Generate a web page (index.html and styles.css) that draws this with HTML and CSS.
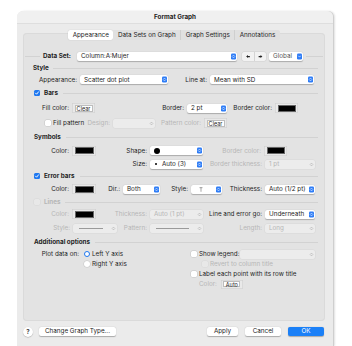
FILE: index.html
```html
<!DOCTYPE html>
<html lang="en">
<head>
  <meta charset="UTF-8">
  <title>Format Graph</title>
  <link rel="stylesheet" href="styles.css">
</head>
<body>

<div class="window">
  <div class="titlebar">Format Graph</div>

  <div class="content">
    <div class="tabs">
      <div class="tab active">Appearance</div>
      <div class="tab">Data Sets on Graph</div>
      <div class="tab">Graph Settings</div>
      <div class="tab last">Annotations</div>
    </div>

    <div class="panel">
      <!-- data set selector -->
      <div class="row ds-row">
        <span></span>
        <span class="rule"></span>
        <span class="ds-label">Data Set:</span>
        <div class="popup"><span>Column:A:Mujer</span><svg class="step" viewBox="0 0 10 12"><rect width="10" height="12" rx="2.5"/><path d="M3 5.2 5 3.2 7 5.2M3 6.8 5 8.8 7 6.8"/></svg></div>
        <span></span>
        <div class="arrows">
          <svg viewBox="0 0 8 8"><path d="M1 4 4 1.5V3H7V5H4V6.5Z"/></svg>
          <svg viewBox="0 0 8 8"><path d="M7 4 4 1.5V3H1V5H4V6.5Z"/></svg>
        </div>
        <span></span>
        <div class="popup"><span class="muted">Global</span><svg class="step" viewBox="0 0 10 12"><rect width="10" height="12" rx="2.5"/><path d="M3 5 5 7.2 7 5"/></svg></div>
        <span></span>
        <span class="rule"></span>
      </div>

      <div class="row hdr"><b>Style</b><span class="rule"></span></div>

      <div class="row short g-app">
        <span class="lbl">Appearance:</span>
        <div class="popup"><span>Scatter dot plot</span><svg class="step" viewBox="0 0 10 12"><rect width="10" height="12" rx="2.5"/><path d="M3 5.2 5 3.2 7 5.2M3 6.8 5 8.8 7 6.8"/></svg></div>
        <span class="lbl">Line at:</span>
        <div class="popup"><span>Mean with SD</span><svg class="step" viewBox="0 0 10 12"><rect width="10" height="12" rx="2.5"/><path d="M3 5.2 5 3.2 7 5.2M3 6.8 5 8.8 7 6.8"/></svg></div>
      </div>

      <div class="row tall hdr chk">
        <span class="check on"><svg viewBox="0 0 10 10"><path d="M2.5 5.2 4.3 7 7.6 3"/></svg></span>
        <b>Bars</b><span class="rule"></span>
      </div>

      <div class="row mid g-fill">
        <span class="lbl">Fill color:</span>
        <div class="well"><span class="btn-in">Clear</span></div>
        <span class="lbl">Border:</span>
        <div class="popup"><span>2 pt</span><svg class="step" viewBox="0 0 10 12"><rect width="10" height="12" rx="2.5"/><path d="M3 5.2 5 3.2 7 5.2M3 6.8 5 8.8 7 6.8"/></svg></div>
        <span class="lbl">Border color:</span>
        <div class="well"><span class="swatch"></span></div>
      </div>

      <div class="row tall g-pat">
        <span class="opt fill-opt"><span class="check"></span>Fill pattern</span>
        <span class="lbl off">Design:</span>
        <div class="popup dis"><span></span><svg class="step" viewBox="0 0 10 12"><path d="M3 5.2 5 3.2 7 5.2M3 6.8 5 8.8 7 6.8"/></svg></div>
        <span class="lbl off">Pattern color:</span>
        <div class="well"><span class="btn-in">Clear</span></div>
      </div>

      <div class="row hdr sym-hdr"><b>Symbols</b><span class="rule"></span></div>

      <div class="row h15 g-sym1">
        <span class="lbl">Color:</span>
        <div class="well"><span class="swatch"></span></div>
        <span class="lbl">Shape:</span>
        <div class="popup"><span class="dot big"></span><svg class="step" viewBox="0 0 10 12"><rect width="10" height="12" rx="2.5"/><path d="M3 5.2 5 3.2 7 5.2M3 6.8 5 8.8 7 6.8"/></svg></div>
        <span class="lbl off">Border color:</span>
        <div class="well"><span class="swatch"></span></div>
      </div>

      <div class="row g-sym2">
        <span></span>
        <span class="lbl">Size:</span>
        <div class="popup"><span><span class="dot small"></span>Auto (3)</span><svg class="step" viewBox="0 0 10 12"><rect width="10" height="12" rx="2.5"/><path d="M3 5.2 5 3.2 7 5.2M3 6.8 5 8.8 7 6.8"/></svg></div>
        <span class="lbl off">Border thickness:</span>
        <div class="popup dis"><span>1 pt</span><svg class="step" viewBox="0 0 10 12"><path d="M3 5.2 5 3.2 7 5.2M3 6.8 5 8.8 7 6.8"/></svg></div>
      </div>

      <div class="row hdr chk">
        <span class="check on"><svg viewBox="0 0 10 10"><path d="M2.5 5.2 4.3 7 7.6 3"/></svg></span>
        <b>Error bars</b><span class="rule"></span>
      </div>

      <div class="row mid g-err">
        <span class="lbl">Color:</span>
        <div class="well"><span class="swatch"></span></div>
        <span class="lbl">Dir.:</span>
        <div class="popup"><span>Both</span><svg class="step" viewBox="0 0 10 12"><rect width="10" height="12" rx="2.5"/><path d="M3 5.2 5 3.2 7 5.2M3 6.8 5 8.8 7 6.8"/></svg></div>
        <span class="lbl">Style:</span>
        <div class="popup"><svg class="cap" viewBox="0 0 8 9"><path d="M1 .8H7M4 .8V9"/></svg><svg class="step" viewBox="0 0 10 12"><rect width="10" height="12" rx="2.5"/><path d="M3 5.2 5 3.2 7 5.2M3 6.8 5 8.8 7 6.8"/></svg></div>
        <span class="lbl">Thickness:</span>
        <div class="popup"><span>Auto (1/2 pt)</span><svg class="step" viewBox="0 0 10 12"><rect width="10" height="12" rx="2.5"/><path d="M3 5.2 5 3.2 7 5.2M3 6.8 5 8.8 7 6.8"/></svg></div>
      </div>

      <div class="row hdr chk off">
        <span class="check dis"></span>
        <span class="hdr-off">Lines</span><span class="rule"></span>
      </div>

      <div class="row g-lin1">
        <span class="lbl off">Color:</span>
        <div class="well"><span class="swatch"></span></div>
        <span class="lbl off">Thickness:</span>
        <div class="popup dis"><span>Auto (1 pt)</span><svg class="step" viewBox="0 0 10 12"><path d="M3 5.2 5 3.2 7 5.2M3 6.8 5 8.8 7 6.8"/></svg></div>
        <span class="lbl">Line and error go:</span>
        <div class="popup"><span>Underneath</span><svg class="step" viewBox="0 0 10 12"><rect width="10" height="12" rx="2.5"/><path d="M3 5.2 5 3.2 7 5.2M3 6.8 5 8.8 7 6.8"/></svg></div>
      </div>

      <div class="row tall g-lin2">
        <span class="lbl off">Style:</span>
        <div class="popup dis"><span class="stroke"></span><svg class="step" viewBox="0 0 10 12"><path d="M3 5.2 5 3.2 7 5.2M3 6.8 5 8.8 7 6.8"/></svg></div>
        <span class="lbl off">Pattern:</span>
        <div class="popup dis"><span class="stroke"></span><svg class="step" viewBox="0 0 10 12"><path d="M3 5.2 5 3.2 7 5.2M3 6.8 5 8.8 7 6.8"/></svg></div>
        <span class="lbl off">Length:</span>
        <div class="popup dis"><span>Long</span><svg class="step" viewBox="0 0 10 12"><path d="M3 5.2 5 3.2 7 5.2M3 6.8 5 8.8 7 6.8"/></svg></div>
      </div>

      <div class="row hdr sym-hdr"><b>Additional options</b><span class="rule"></span></div>

      <div class="extra">
        <div class="extra-left">
          <div class="line plot">
            <span class="lbl">Plot data on:</span>
            <span class="radio on"></span>Left Y axis
          </div>
          <div class="line indent"><span class="radio"></span>Right Y axis</div>
        </div>
        <div class="extra-right">
          <div class="line legend">
            <span class="opt"><span class="check"></span>Show legend:</span>
            <div class="popup dis"><span></span><svg class="step" viewBox="0 0 10 12"><path d="M3 5.2 5 3.2 7 5.2M3 6.8 5 8.8 7 6.8"/></svg></div>
          </div>
          <div class="line revert off"><span class="check dis"></span>Revert to column title</div>
          <div class="line"><span class="check"></span>Label each point with its row title</div>
          <div class="line label-color">
            <span class="off">Color:</span>
            <div class="well auto"><span class="btn-in">Auto</span></div>
          </div>
        </div>
      </div>
    </div>

    <div class="footer">
      <span class="help">?</span>
      <span class="button change">Change Graph Type...</span>
      <span class="spacer"></span>
      <span class="button apply">Apply</span>
      <span class="button cancel">Cancel</span>
      <span class="button ok">OK</span>
    </div>
  </div>
</div>

</body>
</html>
```

FILE: styles.css
```css
body {
  margin: 0;
  background: #fff;
  font-family: Inter, "Liberation Sans", sans-serif;
  font-size: 6.3px;
  color: #1d1d1d;
}
.window {
  margin: 11px 0 0 17px;
  width: 316px;
  height: 335px;
  background: #ebebeb;
  border-radius: 6px 6px 0 0;
  box-shadow: 1px 0 0 #cfcfcf, 2px 0 2px rgba(0,0,0,0.12);
  overflow: hidden;
}
.titlebar {
  height: 12px;
  line-height: 12px;
  text-align: center;
  font-weight: 700;
  background: #f0f0f0;
  border-bottom: 1px solid #dedede;
}
.content {
  padding: 6px 8px 0 6px;
}
.tabs {
  display: flex;
  justify-content: center;
  height: 10px;
  margin-bottom: -7px;
  position: relative;
  z-index: 1;
}
.tab {
  height: 10px;
  line-height: 10px;
  padding: 0 4.5px;
  background: #e0e0e0;
  border-right: 1px solid #cfcfcf;
  box-sizing: border-box;
}
.tab.active {
  background: #fff;
  border-radius: 2px;
  border-right: none;
  box-shadow: 0 0 1px rgba(0,0,0,0.25);
}
.tab.last {
  border-right: none;
  border-radius: 0 2px 2px 0;
}
.panel {
  background: #e3e3e3;
  box-shadow: inset 0 0 0 1px #dadada;
  border-radius: 4px;
  height: 288px;
  padding-top: 17px;
  box-sizing: border-box;
}
.row {
  display: grid;
  align-items: center;
  height: 12px;
}
.row.short { height: 11px; }
.row.mid { height: 14px; }
.row.h15 { height: 15px; }
.row.tall { height: 16px; }

.rule {
  display: block;
  height: 1px;
  background: #d2d2d2;
}
.ds-row {
  grid-template-columns: 2px 15px 37px 160px 5px 24px 3px 34px 3px 17px;
}
.ds-label {
  font-weight: 700;
  padding-left: 3px;
}
.hdr {
  display: flex;
  padding: 0 7px 0 10px;
}
.hdr b { font-weight: 700; }
.hdr .rule {
  flex: 1;
  margin-left: 4px;
}
.hdr.sym-hdr { padding-left: 11px; }
.hdr.sym-hdr .rule { margin-left: 5px; }
.hdr.chk { padding-left: 11px; }
.hdr.chk .check { margin-right: 4px; }
.hdr.chk .rule { margin-left: 5px; }
.hdr-off { color: #b6b6b6; font-weight: 700; }

.g-app { grid-template-columns: 57px 88px 42px 104px; }
.g-fill { grid-template-columns: 49px 23px 92px 40px 48px 23px; }
.g-pat { grid-template-columns: 63px 27px 42px 49px 23px; }
.g-sym1 { grid-template-columns: 49px 24px 54px 53px 61px 23px; }
.g-sym2 { grid-template-columns: 73px 54px 53px 62px 50px; }
.g-err { grid-template-columns: 49px 24px 27px 37px 31px 31px 43px 50px; }
.g-lin1 { grid-template-columns: 49px 24px 54px 53px 62px 50px; }
.g-lin2 { grid-template-columns: 50px 44px 33px 53px 62px 50px; }

.lbl {
  display: flex;
  justify-content: flex-end;
  padding-right: 3px;
  white-space: nowrap;
}
.off { color: #b6b6b6; }
.muted { color: #555; }

.popup {
  display: flex;
  align-items: center;
  justify-content: space-between;
  height: 9px;
  padding: 0 1px 0 4px;
  background: #fff;
  border-radius: 2px;
  box-shadow: 0 0.5px 1px rgba(0,0,0,0.25);
  white-space: nowrap;
  overflow: hidden;
}
.popup .step {
  width: 5px;
  height: 7px;
  flex: none;
}
.step rect { fill: #2f7df6; }
.step path {
  fill: none;
  stroke: #fff;
  stroke-width: 1.2;
  stroke-linecap: round;
  stroke-linejoin: round;
}
.popup.dis {
  background: #ececec;
  box-shadow: 0 0 0 0.5px #d8d8d8;
  color: #b6b6b6;
}
.popup.dis .step path { stroke: #a8a8a8; }
.popup .stroke {
  display: block;
  flex: 1;
  height: 1px;
  background: #9a9a9a;
  margin: 0 8px 0 2px;
}
.popup .cap {
  width: 4px;
  height: 7px;
  margin-left: 4px;
}
.cap path {
  fill: none;
  stroke: #222;
  stroke-width: 0.8;
}
.dot {
  display: inline-block;
  border-radius: 50%;
  background: #000;
  vertical-align: middle;
}
.dot.big { width: 6px; height: 6px; margin-left: 0; }
.dot.small { width: 2px; height: 2px; margin: 0 5px 0 1px; }

.arrows {
  display: flex;
  height: 9px;
  background: #f2f2f2;
  border-radius: 2px;
  box-shadow: 0 0 0 0.5px #cfcfcf;
}
.arrows svg {
  width: 12px;
  height: 9px;
  padding: 2px 3px;
  box-sizing: border-box;
  fill: #222;
}
.arrows svg + svg { border-left: 1px solid #d4d4d4; }

.well {
  height: 10px;
  padding: 1.5px 2.5px;
  box-sizing: border-box;
  background: #e9e9e9;
  border-radius: 1px;
  box-shadow: inset 0 0 0 0.5px #c9c9c9;
  display: flex;
}
.swatch {
  flex: 1;
  background: #000;
  border: 0.5px solid #666;
}
.btn-in {
  flex: 1;
  background: #fff;
  border: 0.5px solid #bdbdbd;
  font-size: 5.5px;
  line-height: 6px;
  text-align: center;
}

.check {
  display: inline-block;
  width: 6px;
  height: 6px;
  border-radius: 1.5px;
  background: #fff;
  box-shadow: 0 0 0 0.5px #c4c4c4;
  flex: none;
  vertical-align: middle;
}
.check.on {
  background: #1f78f0;
  box-shadow: none;
}
.check.on svg {
  display: block;
  width: 6px;
  height: 6px;
  fill: none;
  stroke: #fff;
  stroke-width: 1.6;
  stroke-linecap: round;
  stroke-linejoin: round;
}
.check.dis {
  background: #e8e8e8;
  box-shadow: 0 0 0 0.5px #d8d8d8;
}
.opt {
  display: flex;
  align-items: center;
  white-space: nowrap;
}
.opt .check { margin-right: 2px; }
.fill-opt { padding-left: 22px; }

.extra {
  display: flex;
  padding-top: 1px;
}
.extra-left { width: 168px; }
.extra-right { flex: 1; }
.line {
  display: flex;
  align-items: center;
  height: 10px;
  white-space: nowrap;
}
.line .check { margin-right: 2px; }
.plot .lbl { width: 61px; padding-right: 5px; box-sizing: border-box; }
.line.indent { padding-left: 61px; }
.radio {
  width: 6px;
  height: 6px;
  border-radius: 50%;
  background: #fff;
  box-shadow: 0 0 0 0.5px #c4c4c4;
  margin-right: 2px;
  box-sizing: border-box;
  flex: none;
}
.radio.on {
  background: #fff;
  border: 1.8px solid #1f78f0;
  box-shadow: none;
}
.legend {
  display: grid;
  grid-template-columns: 49px 75px;
}
.revert { padding-left: 11px; }
.label-color { padding-left: 8px; }
.well.auto {
  width: 22px;
  height: 9px;
  margin-left: 4px;
}

.footer {
  display: flex;
  align-items: center;
  margin-top: 6px;
  padding-right: 1px;
  height: 9px;
}
.help {
  width: 10px;
  height: 10px;
  border-radius: 50%;
  background: #fff;
  box-shadow: 0 0.5px 1px rgba(0,0,0,0.3);
  text-align: center;
  line-height: 10px;
  font-weight: 700;
  font-size: 6px;
  color: #444;
}
.button {
  height: 9px;
  line-height: 9px;
  text-align: center;
  background: #fff;
  border-radius: 2px;
  box-shadow: 0 0.5px 1px rgba(0,0,0,0.28);
}
.change { width: 77px; margin-left: 6px; }
.spacer { flex: 1; }
.apply { width: 31px; }
.cancel { width: 36px; margin-left: 7px; }
.ok {
  width: 36px;
  margin-left: 7px;
  background: #1b80f7;
  color: #fff;
}
```
